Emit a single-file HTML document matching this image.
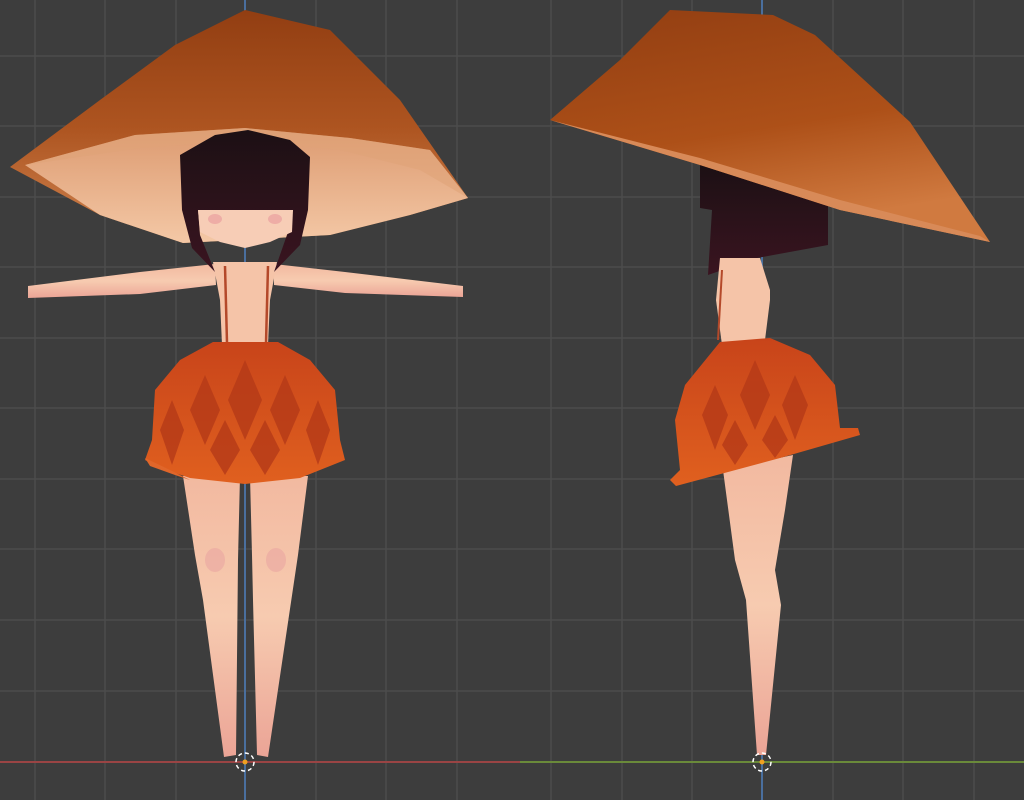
<!DOCTYPE html>
<html><head><meta charset="utf-8"><style>html,body{margin:0;padding:0;background:#3d3d3d;overflow:hidden}svg{display:block}</style></head>
<body>
<svg width="1024" height="800" viewBox="0 0 1024 800" xmlns="http://www.w3.org/2000/svg">
<defs>
<linearGradient id="hatTop" x1="0" y1="0" x2="0" y2="1"><stop offset="0" stop-color="#923e12"/><stop offset="0.5" stop-color="#ad5420"/><stop offset="1" stop-color="#cf8450"/></linearGradient>
<linearGradient id="hatUnder" x1="0" y1="0" x2="0" y2="1"><stop offset="0" stop-color="#dc9a70"/><stop offset="1" stop-color="#f4c8a6"/></linearGradient>
<linearGradient id="hatR" x1="0" y1="0" x2="0.3" y2="1"><stop offset="0" stop-color="#923e12"/><stop offset="0.6" stop-color="#ad5018"/><stop offset="1" stop-color="#d07a40"/></linearGradient>
<linearGradient id="hair" x1="0" y1="0" x2="0" y2="1"><stop offset="0" stop-color="#1c1014"/><stop offset="1" stop-color="#3a1420"/></linearGradient>
<linearGradient id="skin" x1="0" y1="0" x2="0" y2="1"><stop offset="0" stop-color="#f2b9a0"/><stop offset="0.5" stop-color="#f7cbb0"/><stop offset="1" stop-color="#eba496"/></linearGradient>
<linearGradient id="skirt" x1="0" y1="0" x2="0" y2="1"><stop offset="0" stop-color="#c8441a"/><stop offset="1" stop-color="#e0601f"/></linearGradient>
</defs>
<rect width="1024" height="800" fill="#3d3d3d"/>
<g stroke="#4c4c4c" stroke-width="1.5">
<line x1="35" y1="0" x2="35" y2="800"/><line x1="105" y1="0" x2="105" y2="800"/><line x1="176" y1="0" x2="176" y2="800"/><line x1="316" y1="0" x2="316" y2="800"/><line x1="386" y1="0" x2="386" y2="800"/><line x1="457" y1="0" x2="457" y2="800"/>
<line x1="551" y1="0" x2="551" y2="800"/><line x1="622" y1="0" x2="622" y2="800"/><line x1="692" y1="0" x2="692" y2="800"/><line x1="833" y1="0" x2="833" y2="800"/><line x1="903" y1="0" x2="903" y2="800"/><line x1="974" y1="0" x2="974" y2="800"/>
<line x1="0" y1="56" x2="1024" y2="56"/><line x1="0" y1="126" x2="1024" y2="126"/><line x1="0" y1="197" x2="1024" y2="197"/><line x1="0" y1="267" x2="1024" y2="267"/><line x1="0" y1="338" x2="1024" y2="338"/><line x1="0" y1="408" x2="1024" y2="408"/><line x1="0" y1="479" x2="1024" y2="479"/><line x1="0" y1="549" x2="1024" y2="549"/><line x1="0" y1="620" x2="1024" y2="620"/><line x1="0" y1="691" x2="1024" y2="691"/>
</g>
<line x1="245" y1="0" x2="245" y2="800" stroke="#4a6f9e" stroke-width="2"/>
<line x1="762" y1="0" x2="762" y2="800" stroke="#4a6f9e" stroke-width="2"/>
<line x1="0" y1="762" x2="520" y2="762" stroke="#9a4444" stroke-width="2"/>
<line x1="520" y1="762" x2="1024" y2="762" stroke="#6a8a3a" stroke-width="2"/>

<polygon points="10,167 100,100 175,45 245,10 330,30 400,100 468,198 410,215 330,235 183,243 100,215" fill="url(#hatTop)"/>
<polygon points="25,165 135,135 245,128 350,138 430,150 468,198 410,215 330,235 183,243 100,215" fill="url(#hatUnder)"/>
<polygon points="25,165 135,135 245,128 350,138 430,150 468,198 420,170 340,150 245,140 140,148" fill="#e0a478" opacity="0.6"/>
<polygon points="28,286 140,272 215,264 216,285 140,294 28,298" fill="url(#skin)"/>
<polygon points="274,264 345,272 463,286 463,297 345,293 274,285" fill="url(#skin)"/>
<polygon points="213,262 277,262 270,300 268,345 222,345 220,300" fill="#f5c4a8"/>
<line x1="225" y1="266" x2="227" y2="343" stroke="#b4492a" stroke-width="2.5"/>
<line x1="268" y1="266" x2="266" y2="343" stroke="#b4492a" stroke-width="2.5"/>
<polygon points="180,155 215,135 248,130 290,140 310,157 308,210 300,245 274,272 288,232 293,210 198,210 200,235 215,272 192,248 182,210" fill="url(#hair)"/>
<polygon points="198,210 293,210 292,232 270,242 245,248 220,242 200,232" fill="#f7cdb6"/>
<ellipse cx="215" cy="219" rx="7" ry="5" fill="#eaa0a0" opacity="0.7"/><ellipse cx="275" cy="219" rx="7" ry="5" fill="#eaa0a0" opacity="0.7"/>
<polygon points="183,476 240,476 238,560 236,755 224,757 203,600 195,555" fill="url(#skin)"/>
<polygon points="250,476 308,476 298,555 268,757 257,755 253,600 252,555" fill="url(#skin)"/>
<ellipse cx="215" cy="560" rx="10" ry="12" fill="#e8a0a0" opacity="0.5"/><ellipse cx="276" cy="560" rx="10" ry="12" fill="#e8a0a0" opacity="0.5"/>
<polygon points="213,342 278,342 310,360 335,390 340,440 345,460 325,468 300,478 245,484 190,478 160,468 145,460 152,440 155,390 180,360" fill="url(#skirt)"/>
<g fill="#b53a18" opacity="0.8">
<polygon points="245,360 262,400 245,440 228,400"/><polygon points="205,375 220,410 205,445 190,410"/><polygon points="285,375 300,410 285,445 270,410"/>
<polygon points="225,420 240,450 225,475 210,450"/><polygon points="265,420 280,450 265,475 250,450"/>
<polygon points="172,400 184,430 172,465 160,430"/><polygon points="318,400 330,430 318,465 306,430"/>
</g>
<polygon points="145,458 170,470 190,480 175,475 150,466" fill="#e0662a"/>

<polygon points="700,165 828,205 828,245 757,258 708,275 712,210 700,208" fill="url(#hair)"/>
<polygon points="720,258 760,258 770,290 770,300 765,340 722,345 716,300" fill="#f5c4a8"/>
<line x1="722" y1="270" x2="718" y2="340" stroke="#b4492a" stroke-width="2"/>
<polygon points="550,120 620,60 670,10 773,15 815,35 910,122 990,242 840,210 700,165" fill="url(#hatR)"/>
<polygon points="550,120 700,165 840,210 990,242 980,236 840,200 700,158" fill="#d88a58"/>
<polygon points="723,470 793,455 785,510 775,570 781,605 766,755 757,755 746,600 735,560" fill="url(#skin)"/>
<polygon points="720,342 770,338 810,355 835,385 840,428 858,428 860,435 780,458 676,486 670,480 680,470 675,420 685,385" fill="url(#skirt)"/>
<g fill="#b53a18" opacity="0.8">
<polygon points="755,360 770,395 755,430 740,395"/><polygon points="795,375 808,405 795,440 782,405"/><polygon points="715,385 728,415 715,450 702,415"/><polygon points="735,420 748,445 735,465 722,445"/><polygon points="775,415 788,440 775,458 762,440"/>
</g>
<circle cx="245" cy="762" r="9" fill="none" stroke="#ffffff" stroke-width="1.5" stroke-dasharray="4 3"/><circle cx="245" cy="762" r="2.5" fill="#f0a020"/>
<circle cx="762" cy="762" r="9" fill="none" stroke="#ffffff" stroke-width="1.5" stroke-dasharray="4 3"/><circle cx="762" cy="762" r="2.5" fill="#f0a020"/>
</svg>
</body></html>
